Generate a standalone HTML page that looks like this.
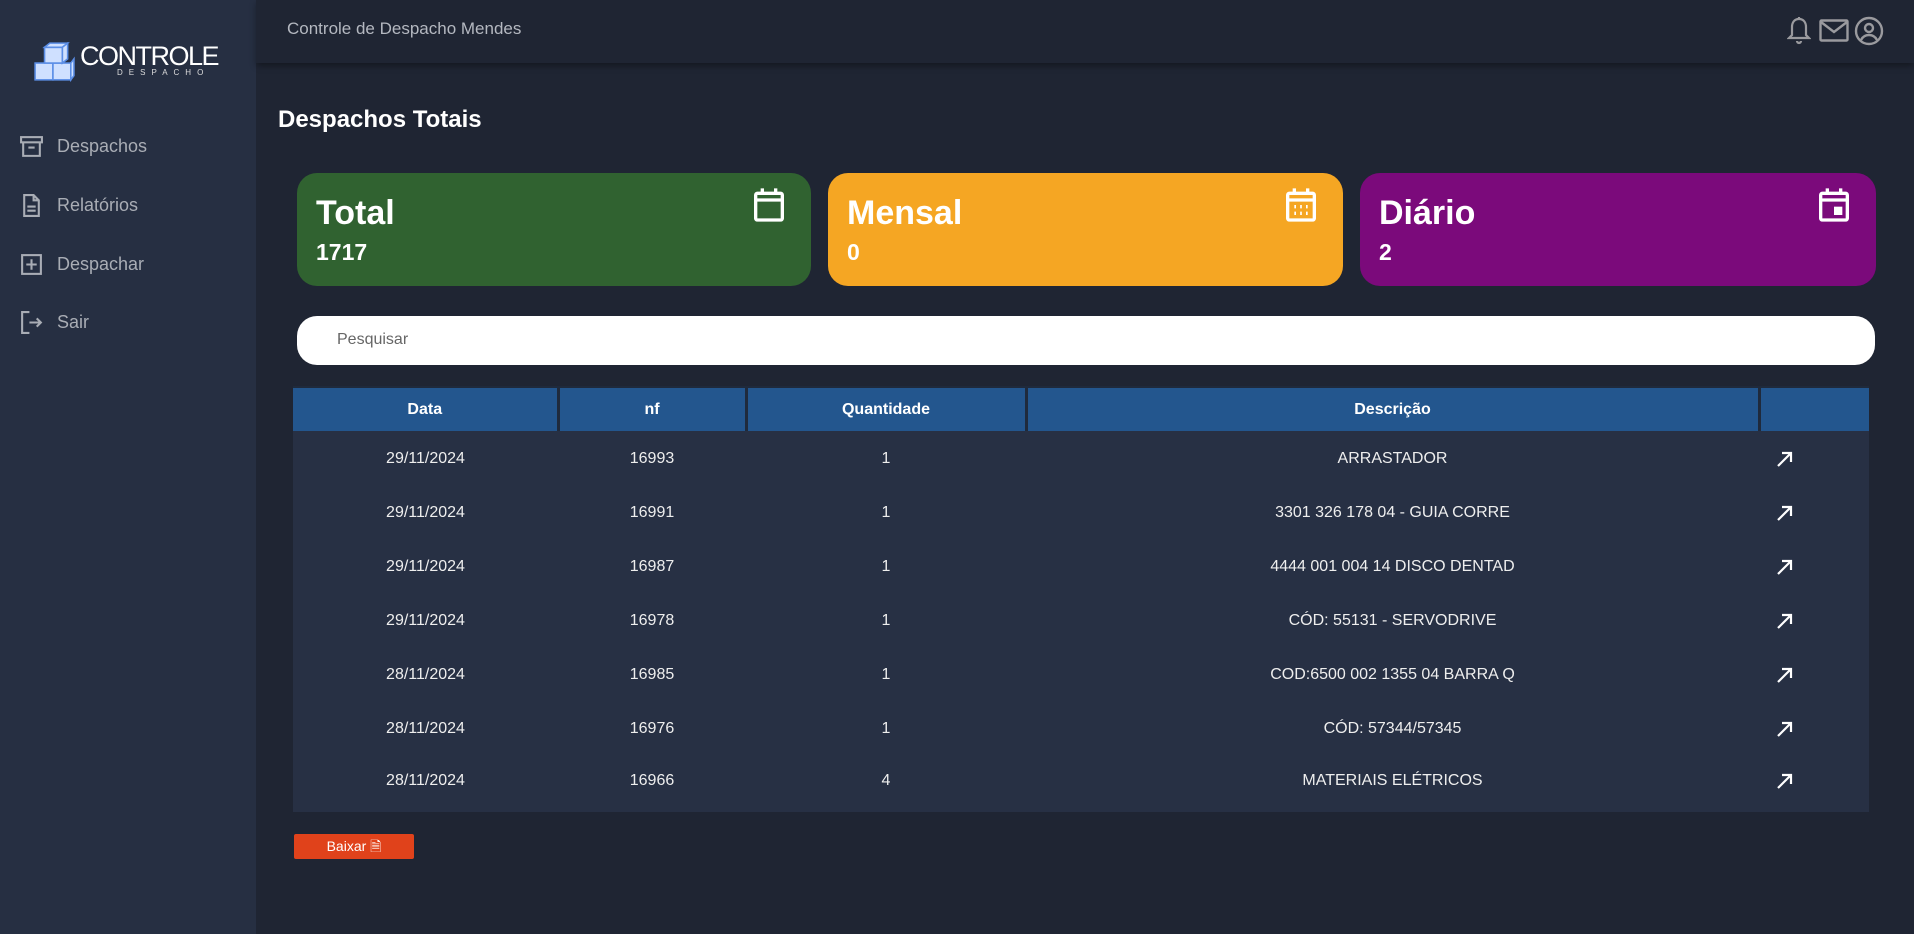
<!DOCTYPE html>
<html><head><meta charset="utf-8">
<style>
*{margin:0;padding:0;box-sizing:border-box}
body{width:1914px;height:934px;background:#1f2533;font-family:"Liberation Sans",sans-serif;position:relative;overflow:hidden;color:#fff}
.side{position:absolute;left:0;top:0;width:256px;height:934px;background:#262f42}
.hdr{position:absolute;left:256px;top:0;right:0;height:63px;background:#1f2533;box-shadow:0 3px 6px rgba(0,0,0,.35)}
.hdr .t{position:absolute;left:31px;top:19px;font-size:17px;color:#b4b8c0}
.nav{position:absolute;left:19px;display:flex;align-items:center;color:#a9adb5;font-size:18px}
.nav svg{width:25px;height:25px;margin-right:13px}
.title{position:absolute;left:278px;top:106px;font-size:24px;font-weight:bold}
.card{position:absolute;top:173px;height:113px;border-radius:20px}
.card .h{position:absolute;left:19px;top:21px;font-size:34px;font-weight:bold}
.card .n{position:absolute;left:19px;top:66px;font-size:23px;font-weight:bold}
.card svg{position:absolute;right:22px;top:12px;width:40px;height:40px}
.search{position:absolute;left:297px;top:316px;width:1578px;height:49px;background:#fff;border-radius:20px}
.search span{position:absolute;left:40px;top:15px;font-size:16px;color:#666}
table{position:absolute;left:293px;top:386px;width:1576px;border-collapse:collapse;background:#273044}
th{background:#23568e;height:44px;font-size:16px;font-weight:bold;border-left:3px solid #1f2a3c;border-top:2px solid #1f2a3c}
th:first-child{border-left:none}
td{height:54px;text-align:center;font-size:16px;color:#eee;padding-top:2px}
td.a{text-align:left;padding-left:17px}
td.a svg{width:18px;height:18px;display:block}
tr.last td{height:57px;vertical-align:top;padding-top:17px}
.btn{position:absolute;left:294px;top:834px;width:120px;height:25px;background:#e0421b;border-radius:2px;font-size:14px;text-align:center;line-height:25px}
</style></head><body>
<div class="side">
  <svg style="position:absolute;left:33px;top:42px" width="42" height="40" viewBox="0 0 40 38">
    <g fill="#cfe0ff" stroke="#5b8ee6" stroke-width="1.5">
      <rect x="2" y="20" width="17" height="16"/><rect x="19" y="20" width="17" height="16"/><rect x="11" y="5" width="17" height="15"/>
      <polygon points="11,5 16,1 33,1 28,5"/><polygon points="28,5 33,1 33,16 28,20"/><polygon points="36,20 39,16 39,32 36,36"/>
    </g>
  </svg>
  <div style="position:absolute;left:80px;top:41px;font-size:27px;letter-spacing:-1.5px;color:#fff;font-family:'Liberation Sans Narrow','Liberation Sans',sans-serif">CONTROLE</div>
  <div style="position:absolute;left:117px;top:68px;font-size:8px;letter-spacing:6px;color:#ddd">DESPACHO</div>
  <div class="nav" style="top:134px"><svg viewBox="0 0 24 24" fill="none" stroke="#a9adb5" stroke-width="2"><rect x="2" y="3" width="20" height="5"/><path d="M4 8v13h16V8M9 13h6"/></svg>Despachos</div>
  <div class="nav" style="top:193px"><svg viewBox="0 0 24 24" fill="none" stroke="#a9adb5" stroke-width="2"><path d="M5 2h9l5 5v15H5z M14 2v5h5 M8 13h8M8 17h8"/></svg>Relatórios</div>
  <div class="nav" style="top:252px"><svg viewBox="0 0 24 24" fill="none" stroke="#a9adb5" stroke-width="2"><rect x="3" y="3" width="18" height="18"/><path d="M12 7v10M7 12h10"/></svg>Despachar</div>
  <div class="nav" style="top:310px"><svg viewBox="0 0 24 24" fill="none" stroke="#a9adb5" stroke-width="2"><path d="M10 2H3v20h7M10 12h11M17 8l4 4-4 4"/></svg>Sair</div>
</div>
<div class="hdr"><div class="t">Controle de Despacho Mendes</div>
  <svg style="position:absolute;left:1531px;top:16px" width="24" height="29" viewBox="0 0 24 29" fill="none" stroke="#9a9a9e" stroke-width="2.2"><path d="M12 3c-5 0-7 4-7 8v8l-3 3h20l-3-3v-8c0-4-2-8-7-8zM12 1v2M10 25a2 2 0 0 0 4 0"/></svg>
  <svg style="position:absolute;left:1563px;top:19px" width="30" height="23" viewBox="0 0 30 23" fill="none" stroke="#9a9a9e" stroke-width="2.4"><rect x="1.5" y="1.5" width="27" height="20" rx="1"/><path d="M2 3l13 10 13-10"/></svg>
  <svg style="position:absolute;left:1598px;top:16px" width="30" height="30" viewBox="0 0 30 30" fill="none" stroke="#9a9a9e" stroke-width="2.4"><circle cx="15" cy="15" r="13"/><circle cx="15" cy="12" r="4"/><path d="M7 24c2-4 5-5 8-5s6 1 8 5"/></svg>
</div>
<div class="title">Despachos Totais</div>
<div class="card" style="left:297px;width:514px;background:#306230"><div class="h">Total</div><div class="n">1717</div>
<svg viewBox="0 0 24 24" fill="none" stroke="#fff" stroke-width="2"><rect x="4" y="5" width="16" height="16" rx="1"/><path d="M4 9h16M8 2v4M16 2v4"/></svg></div>
<div class="card" style="left:828px;width:515px;background:#f5a623"><div class="h">Mensal</div><div class="n">0</div>
<svg viewBox="0 0 24 24" fill="none" stroke="#fff" stroke-width="2"><rect x="4" y="5" width="16" height="16" rx="1"/><path d="M4 9h16M8 2v4M16 2v4"/><path d="M8 13h1M11.5 13h1M15 13h1M8 17h1M11.5 17h1M15 17h1" stroke-width="2"/></svg></div>
<div class="card" style="left:1360px;width:516px;background:#7b0a7b"><div class="h">Diário</div><div class="n">2</div>
<svg viewBox="0 0 24 24" fill="none" stroke="#fff" stroke-width="2"><rect x="4" y="5" width="16" height="16" rx="1"/><path d="M4 9h16M8 2v4M16 2v4"/><rect x="13" y="14" width="3" height="3" fill="#fff"/></svg></div>
<div class="search"><span>Pesquisar</span></div>
<table>
<tr><th style="width:265px">Data</th><th style="width:188px">nf</th><th style="width:280px">Quantidade</th><th style="width:733px">Descrição</th><th></th></tr>
<tr><td>29/11/2024</td><td>16993</td><td>1</td><td>ARRASTADOR</td><td class="a"><svg viewBox="0 0 18 18" fill="none" stroke="#fff" stroke-width="2.2"><path d="M2 16L15 3M6 3h9v9"/></svg></td></tr>
<tr><td>29/11/2024</td><td>16991</td><td>1</td><td>3301 326 178 04 - GUIA CORRE</td><td class="a"><svg viewBox="0 0 18 18" fill="none" stroke="#fff" stroke-width="2.2"><path d="M2 16L15 3M6 3h9v9"/></svg></td></tr>
<tr><td>29/11/2024</td><td>16987</td><td>1</td><td>4444 001 004 14 DISCO DENTAD</td><td class="a"><svg viewBox="0 0 18 18" fill="none" stroke="#fff" stroke-width="2.2"><path d="M2 16L15 3M6 3h9v9"/></svg></td></tr>
<tr><td>29/11/2024</td><td>16978</td><td>1</td><td>CÓD: 55131 - SERVODRIVE</td><td class="a"><svg viewBox="0 0 18 18" fill="none" stroke="#fff" stroke-width="2.2"><path d="M2 16L15 3M6 3h9v9"/></svg></td></tr>
<tr><td>28/11/2024</td><td>16985</td><td>1</td><td>COD:6500 002 1355 04 BARRA Q</td><td class="a"><svg viewBox="0 0 18 18" fill="none" stroke="#fff" stroke-width="2.2"><path d="M2 16L15 3M6 3h9v9"/></svg></td></tr>
<tr><td>28/11/2024</td><td>16976</td><td>1</td><td>CÓD: 57344/57345</td><td class="a"><svg viewBox="0 0 18 18" fill="none" stroke="#fff" stroke-width="2.2"><path d="M2 16L15 3M6 3h9v9"/></svg></td></tr>
<tr class="last"><td>28/11/2024</td><td>16966</td><td>4</td><td>MATERIAIS ELÉTRICOS</td><td class="a"><svg viewBox="0 0 18 18" fill="none" stroke="#fff" stroke-width="2.2"><path d="M2 16L15 3M6 3h9v9"/></svg></td></tr>
</table>
<div class="btn">Baixar &#128462;</div>
</body></html>
